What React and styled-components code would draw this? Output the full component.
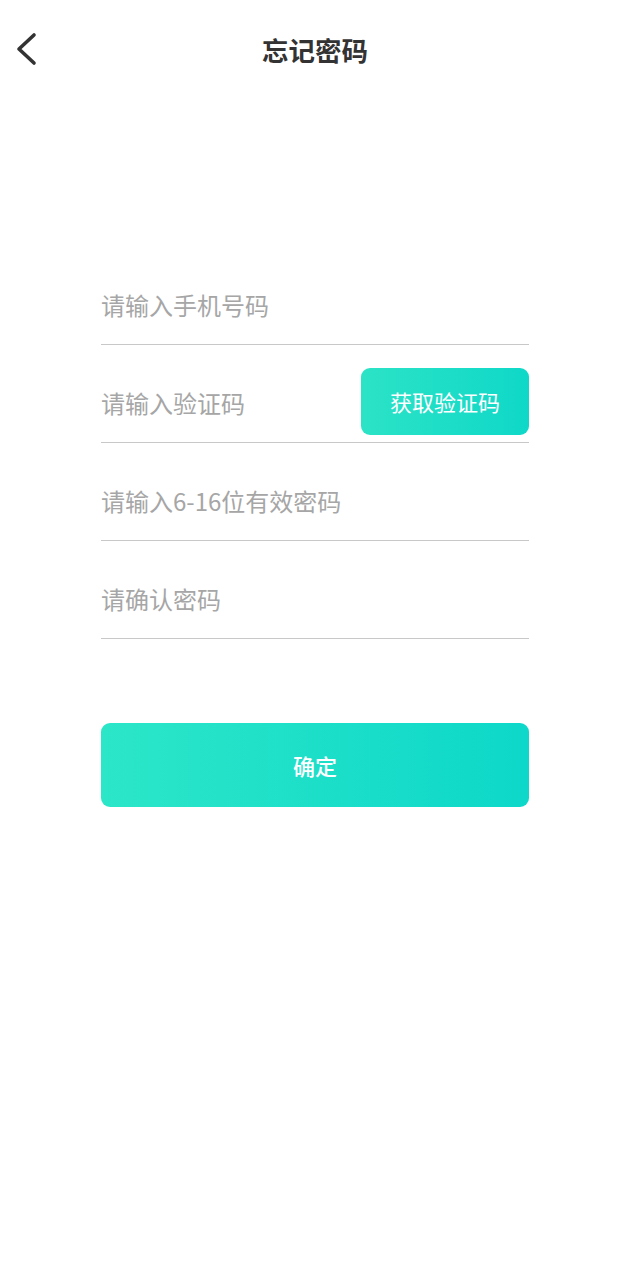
import React from "react";
import styled, { createGlobalStyle } from "styled-components";

const GlobalStyle = createGlobalStyle`
  html, body { margin: 0; padding: 0; background: #ffffff; }
  body { font-family: "Noto Sans CJK SC", "Noto Sans", sans-serif; }
  * { box-sizing: border-box; }
`;

const Page = styled.div`
  width: 630px;
  min-height: 1280px;
  background: #fff;
  display: flex;
  flex-direction: column;
`;

const Header = styled.header`
  height: 100px;
  display: grid;
  grid-template-columns: 60px 1fr 60px;
  align-items: center;
`;

const BackButton = styled.button`
  border: none;
  background: none;
  padding: 0 0 0 14px;
  height: 100px;
  display: flex;
  align-items: center;
  margin-top: -2px;
  cursor: pointer;
`;

const Title = styled.h1`
  margin: 0;
  text-align: center;
  font-size: 26.5px;
  font-weight: 700;
  color: #333;
  line-height: 1;
`;

const Form = styled.form`
  margin: 168px 101px 0 101px;
  display: flex;
  flex-direction: column;
  gap: 21px;
`;

const Row = styled.div`
  height: 77px;
  border-bottom: 1px solid #c8c8c8;
  display: flex;
  align-items: center;
  justify-content: space-between;
`;

const Input = styled.input`
  flex: 1;
  min-width: 0;
  border: none;
  outline: none;
  background: transparent;
  font-family: "Noto Sans CJK SC", "Noto Sans", sans-serif;
  font-size: 24px;
  color: #333;
  padding: 0;
  margin-top: -4px;
  &::placeholder { color: #a6a6a6; }
`;

const CodeButton = styled.button`
  width: 168px;
  height: 67px;
  border: none;
  border-radius: 9px;
  background: linear-gradient(90deg, #2ce3c6 0%, #0fd8c8 100%);
  color: #fff;
  font-family: "Noto Sans CJK SC", "Noto Sans", sans-serif;
  font-size: 22px;
  margin-bottom: 6px;
  padding: 0;
`;

const Submit = styled.button`
  margin: 84px 101px 0 101px;
  height: 84px;
  border: none;
  border-radius: 9px;
  background: linear-gradient(90deg, #2ce6c8 0%, #0dd8c9 100%);
  color: #fff;
  font-family: "Noto Sans CJK SC", "Noto Sans", sans-serif;
  font-size: 22px;
  font-weight: 500;
  padding: 0;
`;

export default function App() {
  return (
    <Page>
      <GlobalStyle />
      <Header>
        <BackButton type="button" aria-label="back">
          <svg width="26" height="36" viewBox="0 0 26 36">
            <path d="M20 4 L5 18 L20 32" fill="none" stroke="#333" strokeWidth="3.6" strokeLinecap="round" strokeLinejoin="round" />
          </svg>
        </BackButton>
        <Title>忘记密码</Title>
        <div />
      </Header>
      <Form onSubmit={(e) => e.preventDefault()}>
        <Row>
          <Input placeholder="请输入手机号码" />
        </Row>
        <Row>
          <Input placeholder="请输入验证码" />
          <CodeButton type="button">获取验证码</CodeButton>
        </Row>
        <Row>
          <Input placeholder="请输入6-16位有效密码" type="password" />
        </Row>
        <Row>
          <Input placeholder="请确认密码" type="password" />
        </Row>
      </Form>
      <Submit type="button">确定</Submit>
    </Page>
  );
}
